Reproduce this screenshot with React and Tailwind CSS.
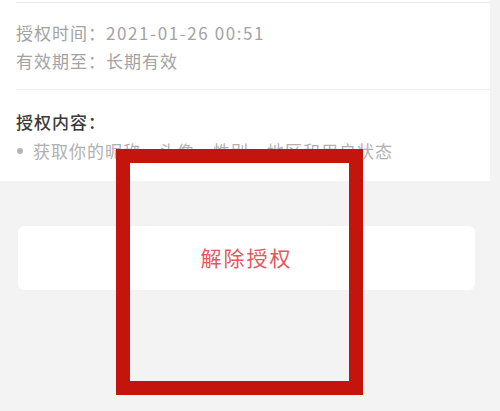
export default function App() {
  const font = { fontFamily: '"Noto Sans CJK SC", "Noto Sans", sans-serif' }
  return (
    <div className="relative w-[500px] h-[411px] overflow-hidden bg-[#f3f3f3]" style={font}>
      {/* Info card */}
      <div className="w-[490px] h-[181px] bg-white pt-[2px] pl-4">
        <div className="h-px bg-[#ececec] mr-0" />
        <div className="pt-[16px] text-[17px] leading-[28px] text-[#a3a3a3]">
          <p><span className="tracking-[1px]">授权时间：</span><span className="tracking-[1.6px]">2021-01-26 00:51</span></p>
          <p className="tracking-[1px]">有效期至：长期有效</p>
        </div>
        <div className="h-px bg-[#efefef] mt-[14px]" />
        <p className="mt-[18px] text-[17px] leading-[28px] tracking-[1px] text-[#3a3a3a] font-medium">授权内容：</p>
        <div className="flex items-center text-[17px] leading-[30px] tracking-[1px] text-[#b0b0b0]">
          <span className="w-[6px] h-[6px] rounded-full bg-[#b5b5b5] ml-[1px] mr-[10px]" />
          <span>获取你的昵称、头像、性别、地区和用户状态</span>
        </div>
      </div>

      {/* Revoke button */}
      <div className="pt-[45px] pl-[18px]">
        <button className="w-[457px] h-[64px] rounded-md bg-white flex items-center justify-center text-[21px] tracking-[2px] text-[#e2585c]">
          解除授权
        </button>
      </div>

      {/* Highlight box */}
      <div className="absolute left-[116px] top-[149px] w-[247px] h-[246px] border-[14px] border-[#c3140e]" />
    </div>
  )
}
